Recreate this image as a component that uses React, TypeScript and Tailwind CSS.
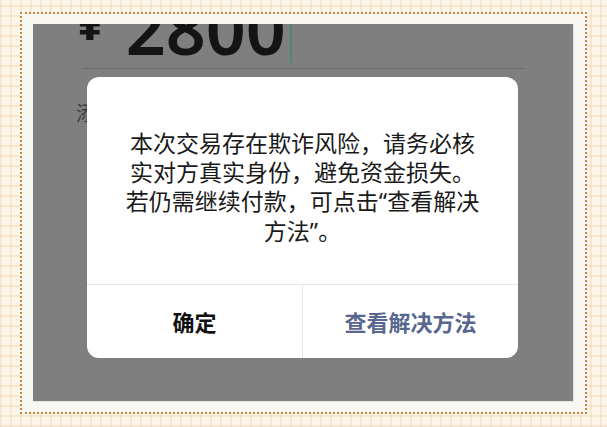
import React from 'react';

const cjk = "font-['Noto_Sans_CJK_SC','Noto_Sans',sans-serif]";

// Latin quote marks so they stay narrow like the original
const Q = ({ c }: { c: string }) => <span className="font-['Noto_Sans',sans-serif]">{c}</span>;

// Risk warning dialog shown over the transfer page
const RiskDialog = () => (
    <div className={`absolute left-[54px] top-[53px] w-[431px] h-[281px] bg-white rounded-[12px] flex flex-col overflow-hidden ${cjk}`}>
        <div className="flex-1 flex flex-col items-center pt-[51px] text-[23px] leading-[29px] text-[#1a1a1a] text-center">
            <p>本次交易存在欺诈风险，请务必核</p>
            <p>实对方真实身份，避免资金损失。</p>
            <p>若仍需继续付款，可点击<Q c="“" />查看解决</p>
            <p>方法<Q c="”" />。</p>
        </div>
        <div className="h-[74px] flex border-t border-[#e6e6e6]">
            <div className="flex-1 flex items-center justify-center text-[22px] font-bold text-[#111]">
                确定
            </div>
            <div className="flex-1 flex items-center justify-center text-[22px] font-bold text-[#58678e] border-l border-[#e6e6e6]">
                查看解决方法
            </div>
        </div>
    </div>
);

export default function App() {
    return (
        <div className="w-[607px] h-[427px] pt-[12px] pl-[20px] pr-[20px] pb-[13px] bg-[#fbf5ea] bg-[repeating-linear-gradient(90deg,rgba(238,200,150,0.3)_0_2px,transparent_2px_10px),repeating-linear-gradient(0deg,rgba(238,200,150,0.3)_0_2px,transparent_2px_10px)]">
            <div className="h-full border-2 border-dotted border-[#c9843c] bg-[#f8f6f1] pt-[10px] pl-[11px] pr-[12px] pb-[11px]">
                <div className="relative h-full bg-[#7f7f7f] overflow-hidden shadow-[1px_1px_0_#e2e2e2]">
                    {/* amount row, mostly cut off at the top */}
                    <div className="flex items-end h-[31px] text-[#141414] font-['Noto_Sans',sans-serif]">
                        <span className="ml-[42px] text-[52px] leading-[52px] mb-[9px] font-bold">¥</span>
                        <span className="ml-[21px] text-[70px] leading-[70px] -mb-[8px] font-semibold">2800</span>
                        <span className="ml-[4px] w-[2px] h-[39px] bg-[#4d8a72] self-start -mb-[8px]"></span>
                    </div>
                    <div className="ml-[49px] mt-[13px] w-[443px] h-px bg-[#6c6c6c]"></div>
                    <div className={`ml-[43px] mt-[29px] text-[20px] text-[#3a3a3a] ${cjk}`}>添加转账说明</div>

                    <RiskDialog />
                </div>
            </div>
        </div>
    );
}
